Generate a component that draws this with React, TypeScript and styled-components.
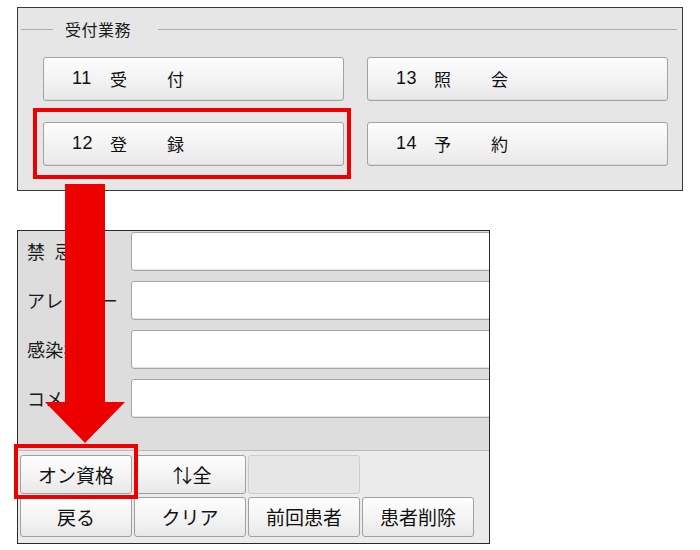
import React from "react";
import styled, { createGlobalStyle } from "styled-components";

const GlobalStyle = createGlobalStyle`
  body {
    margin: 0;
    background: #ffffff;
    font-family: "Liberation Sans", "Noto Sans CJK JP", sans-serif;
    color: #1a1a1a;
  }
`;

const ANNOTATION_RED = "#ec0000";

const Page = styled.div`
  position: relative;
  width: 700px;
  height: 550px;
  box-sizing: border-box;
  padding: 7px 0 0 17px;
`;

/* ---------- 受付業務 panel ---------- */

const MenuPanel = styled.div`
  width: 666px;
  height: 184px;
  box-sizing: border-box;
  border: 1px solid #3a3a3a;
  background: #e6e6e6;
  padding: 9px 5px 0 3px;
`;

const LegendRow = styled.div`
  display: flex;
  align-items: center;
  height: 24px;
`;

const LegendLine = styled.div<{ $grow?: boolean }>`
  height: 1px;
  background: #ababab;
  width: ${({ $grow }) => ($grow ? "auto" : "32px")};
  flex: ${({ $grow }) => ($grow ? "1" : "none")};
`;

const LegendText = styled.span`
  font-family: "Noto Sans CJK JP", sans-serif;
  font-size: 16px;
  line-height: 1;
  padding: 0 27px 0 12px;
  letter-spacing: 0.5px;
`;

const MenuGrid = styled.div`
  display: grid;
  grid-template-columns: 301px 301px;
  grid-template-rows: 44px 44px;
  column-gap: 23px;
  row-gap: 21px;
  margin: 16px 0 0 22px;
`;

const MenuButton = styled.button`
  display: flex;
  align-items: center;
  padding: 0 0 2px 28px;
  border: 1px solid #a3a3a3;
  border-radius: 3px;
  background: linear-gradient(#fdfdfd, #f1f1f1 60%, #e9e9e9);
  box-shadow: inset 0 -1px 0 #dcdcdc;
  font-family: inherit;
  line-height: 1;
  color: #111111;
`;

const MenuNo = styled.span`
  width: 38px;
  font-size: 18px;
  letter-spacing: 0.5px;
  text-align: left;
`;

const MenuName = styled.span`
  font-family: "Noto Sans CJK JP", sans-serif;
  font-size: 17px;
  letter-spacing: 40px;
`;

/* ---------- patient form panel ---------- */

const FormPanel = styled.div`
  width: 473px;
  height: 314px;
  margin-top: 39px;
  box-sizing: border-box;
  border: 1px solid #2a2a2a;
  background: #ebebeb;
  overflow: hidden;
`;

const FieldArea = styled.div`
  display: grid;
  grid-template-columns: 113px 1fr;
  grid-auto-rows: 39px;
  row-gap: 10px;
  padding: 1px 0 32px;
  background: #dddddd;
  border-bottom: 1px solid #b9b9b9;
`;

const FieldLabel = styled.div`
  display: flex;
  align-items: center;
  padding: 0 0 2px 9px;
  font-family: "Noto Sans CJK JP", sans-serif;
  font-size: 18px;
  line-height: 1;
  letter-spacing: 0.2px;
  white-space: nowrap;
  overflow: hidden;
`;

const FieldInput = styled.div`
  width: 380px;
  box-sizing: border-box;
  background: #ffffff;
  border: 1px solid #a6a6a6;
  border-radius: 3px;
  box-shadow: inset 0 -1px 0 #e4e4e4;
`;

const ActionGrid = styled.div`
  display: grid;
  grid-template-columns: repeat(4, 112px);
  grid-template-rows: 39px 40px;
  column-gap: 2px;
  row-gap: 3px;
  padding: 4px 2px;
`;

const ActionButton = styled.button`
  padding: 0 0 1px;
  border: 1px solid ${({ disabled }) => (disabled ? "#cdcdcd" : "#a0a0a0")};
  border-radius: 3px;
  background: ${({ disabled }) =>
    disabled ? "#e6e6e6" : "linear-gradient(#fefefe, #f2f2f2 60%, #e8e8e8)"};
  font-family: "Noto Sans CJK JP", sans-serif;
  font-size: 19px;
  line-height: 1;
  color: #111111;
`;

/* the sort arrows sit tight together, narrower than the kanji */
const SortArrows = styled.span`
  font-family: "Noto Sans CJK JP", sans-serif;
  letter-spacing: -10px;
  margin-right: 6px;
`;

/* ---------- red callouts drawn over the panels ---------- */

const Callout = styled.div<{ $x: number; $y: number; $w: number; $h: number }>`
  position: absolute;
  left: ${({ $x }) => $x}px;
  top: ${({ $y }) => $y}px;
  width: ${({ $w }) => $w}px;
  height: ${({ $h }) => $h}px;
  box-sizing: border-box;
  border: 4px solid ${ANNOTATION_RED};
  pointer-events: none;
`;

const DownArrow = styled.svg`
  position: absolute;
  left: 45px;
  top: 184px;
  pointer-events: none;
`;

const menus = [
  { no: "11", name: "受付" },
  { no: "13", name: "照会" },
  { no: "12", name: "登録" },
  { no: "14", name: "予約" },
];

const fields = ["禁\u2002忌", "アレルギー", "感染症", "コメント"];

type Action = { label: React.ReactNode; disabled?: boolean } | null;

const actions: Action[] = [
  { label: "オン資格" },
  {
    label: (
      <>
        <SortArrows>↑↓</SortArrows>全
      </>
    ),
  },
  { label: "", disabled: true },
  null,
  { label: "戻る" },
  { label: "クリア" },
  { label: "前回患者" },
  { label: "患者削除" },
];

const App = () => {
  return (
    <Page>
      <GlobalStyle />

      <MenuPanel>
        <LegendRow>
          <LegendLine />
          <LegendText>受付業務</LegendText>
          <LegendLine $grow />
        </LegendRow>
        <MenuGrid>
          {menus.map((menu) => (
            <MenuButton key={menu.no}>
              <MenuNo>{menu.no}</MenuNo>
              <MenuName>{menu.name}</MenuName>
            </MenuButton>
          ))}
        </MenuGrid>
      </MenuPanel>

      <FormPanel>
        <FieldArea>
          {fields.map((label) => (
            <React.Fragment key={label}>
              <FieldLabel>{label}</FieldLabel>
              <FieldInput />
            </React.Fragment>
          ))}
        </FieldArea>
        <ActionGrid>
          {actions.map((action, index) =>
            action === null ? (
              <span key={index} />
            ) : (
              <ActionButton key={index} disabled={action.disabled}>
                {action.label}
              </ActionButton>
            )
          )}
        </ActionGrid>
      </FormPanel>

      <Callout $x={33} $y={108} $w={318} $h={71} />
      <Callout $x={14} $y={444} $w={124} $h={55} />
      <DownArrow width="81" height="260" viewBox="0 0 81 260">
        <path d="M20 0 H60 V218 H80 L40 259 L0 218 H20 Z" fill={ANNOTATION_RED} />
      </DownArrow>
    </Page>
  );
};

export default App;
